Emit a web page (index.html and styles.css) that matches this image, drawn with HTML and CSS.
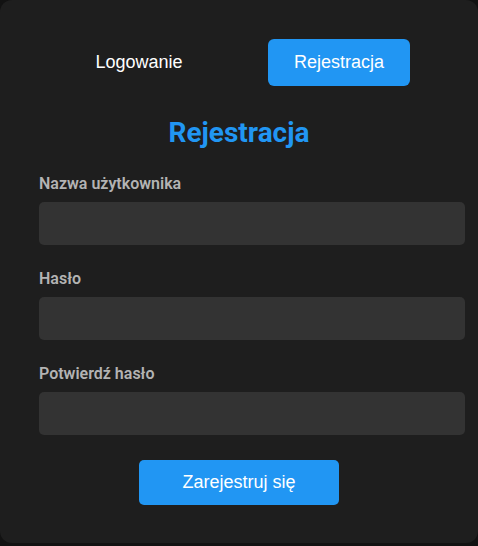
FILE: index.html
```html
<!DOCTYPE html>
<html lang="pl">
<head>
<meta charset="utf-8">
<title>Rejestracja</title>
<link rel="stylesheet" href="styles.css">
</head>
<body>
<div class="card">
  <div class="tabs">
    <button class="tab">Logowanie</button>
    <button class="tab active">Rejestracja</button>
  </div>
  <h2 class="title">Rejestracja</h2>
  <form class="form">
    <div class="field">
      <label class="label">Nazwa użytkownika</label>
      <input class="input" type="text">
    </div>
    <div class="field">
      <label class="label">Hasło</label>
      <input class="input" type="password">
    </div>
    <div class="field">
      <label class="label">Potwierdź hasło</label>
      <input class="input" type="password">
    </div>
    <div class="actions">
      <button class="submit" type="button">Zarejestruj się</button>
    </div>
  </form>
</div>
</body>
</html>
```
FILE: styles.css
```css
html, body {
  margin: 0;
  padding: 0;
  background: #121212;
}
.card {
  box-sizing: border-box;
  height: 543px;
  background: #1e1e1e;
  border-radius: 12px;
  padding: 39px 39px 0 39px;
  width: 478px;
}
.tabs {
  display: flex;
  justify-content: center;
  gap: 58px;
}
.tab {
  width: 142px;
  height: 47px;
  border: none;
  border-radius: 6px;
  background: transparent;
  color: #ffffff;
  font-family: "Liberation Sans", Arial, sans-serif;
  font-size: 18px;
  padding: 0;
}
.tab.active {
  background: #2196f3;
}
.title {
  margin: 30px 0 0 0;
  text-align: center;
  font-family: Roboto, sans-serif;
  font-weight: 700;
  font-size: 28px;
  color: #2196f3;
}
.form {
  margin-top: 25px;
}
.field {
  margin-bottom: 24px;
}
.label {
  display: block;
  font-family: Roboto, sans-serif;
  font-weight: 600;
  font-size: 16px;
  color: #b3b3b3;
  margin-bottom: 9px;
}
.input {
  display: block;
  width: 100%;
  box-sizing: content-box;
  height: 43px;
  padding: 0 13px;
  border: none;
  border-radius: 5px;
  background: #333333;
  color: #ffffff;
  outline: none;
}
.actions {
  display: flex;
  justify-content: center;
  padding-top: 1px;
}
.submit {
  width: 200px;
  height: 45px;
  border: none;
  border-radius: 5px;
  background: #2196f3;
  color: #ffffff;
  font-family: "Liberation Sans", Arial, sans-serif;
  font-size: 18px;
}
```
